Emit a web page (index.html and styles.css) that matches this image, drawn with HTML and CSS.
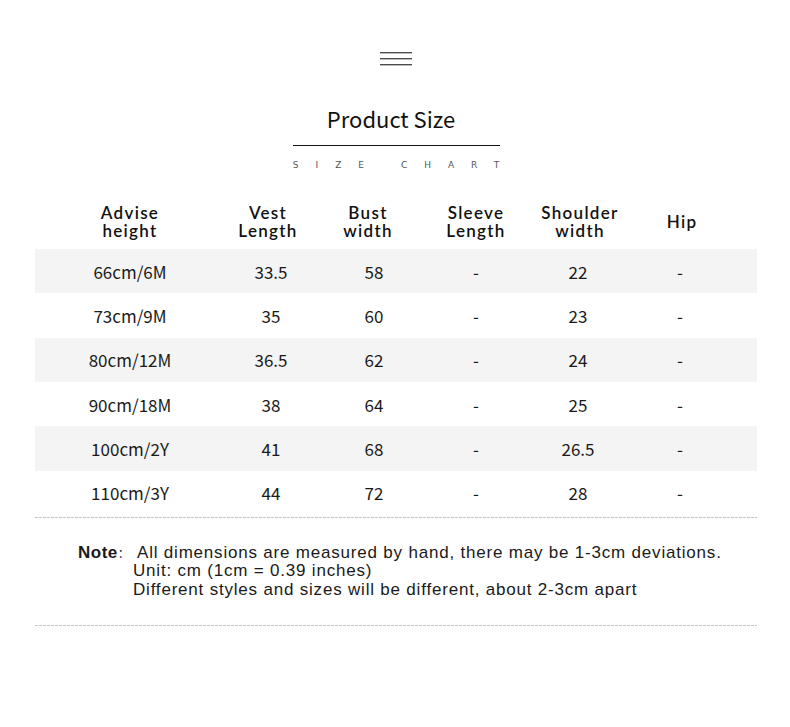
FILE: index.html
```html
<!DOCTYPE html>
<html lang="en">
<head>
<meta charset="utf-8">
<title>Product Size</title>
<link rel="stylesheet" href="styles.css">
</head>
<body>
<div class="page">
  <div class="menu-icon" aria-hidden="true"><span></span><span></span><span></span></div>
  <h1 class="title">Product Size</h1>
  <div class="subtitle">SIZE CHART</div>

  <div class="table">
    <div class="row head">
      <div class="cell first"><span class="hl">Advise</span><span class="hl">height</span></div>
      <div class="cell"><span class="hl">Vest</span><span class="hl">Length</span></div>
      <div class="cell"><span class="hl">Bust</span><span class="hl">width</span></div>
      <div class="cell"><span class="hl">Sleeve</span><span class="hl">Length</span></div>
      <div class="cell"><span class="hl">Shoulder</span><span class="hl">width</span></div>
      <div class="cell"><span class="hl">Hip</span></div>
    </div>
    <div class="row shade">
      <div class="cell first">66cm/6M</div><div class="cell">33.5</div><div class="cell">58</div><div class="cell">-</div><div class="cell">22</div><div class="cell">-</div>
    </div>
    <div class="row">
      <div class="cell first">73cm/9M</div><div class="cell">35</div><div class="cell">60</div><div class="cell">-</div><div class="cell">23</div><div class="cell">-</div>
    </div>
    <div class="row shade">
      <div class="cell first">80cm/12M</div><div class="cell">36.5</div><div class="cell">62</div><div class="cell">-</div><div class="cell">24</div><div class="cell">-</div>
    </div>
    <div class="row">
      <div class="cell first">90cm/18M</div><div class="cell">38</div><div class="cell">64</div><div class="cell">-</div><div class="cell">25</div><div class="cell">-</div>
    </div>
    <div class="row shade">
      <div class="cell first">100cm/2Y</div><div class="cell">41</div><div class="cell">68</div><div class="cell">-</div><div class="cell">26.5</div><div class="cell">-</div>
    </div>
    <div class="row">
      <div class="cell first">110cm/3Y</div><div class="cell">44</div><div class="cell">72</div><div class="cell">-</div><div class="cell">28</div><div class="cell">-</div>
    </div>
  </div>

  <div class="dots"></div>
  <div class="note">
    <div class="note-label"><b>Note</b><span class="colon">：</span></div>
    <div class="note-text">
      <div class="first-line">All dimensions are measured by hand, there may be 1-3cm deviations.</div>
      <div>Unit: cm (1cm = 0.39 inches)</div>
      <div>Different styles and sizes will be different, about 2-3cm apart</div>
    </div>
  </div>
  <div class="dots"></div>
</div>
</body>
</html>
```

FILE: styles.css
```css
html, body {
  margin: 0;
  padding: 0;
  background: #ffffff;
}

.page {
  width: 790px;
  padding-top: 52px;
  display: flex;
  flex-direction: column;
  align-items: center;
  font-family: "Noto Sans CJK SC", "Noto Sans", sans-serif;
  color: #1a1a1a;
}

.menu-icon {
  width: 32px;
  margin-left: 2px;
  display: flex;
  flex-direction: column;
  gap: 4px;
}

.menu-icon span {
  display: block;
  height: 2px;
  background: #4a4a4a;
  border-bottom: 1px solid #bdbdbd;
  box-sizing: border-box;
}

.title {
  margin: 37px 0 0 2px;
  width: 207px;
  box-sizing: border-box;
  padding: 0 10px 12px 0;
  border-bottom: 1px solid #111;
  text-align: center;
  font-size: 22px;
  font-weight: 400;
  line-height: 30px;
  color: #111;
}

.subtitle {
  margin: 13px 0 0 19px;
  font-family: "DejaVu Sans", sans-serif;
  font-size: 9px;
  line-height: 12px;
  letter-spacing: 17px;
  color: #555;
}

.table {
  margin-top: 24px;
  width: 722px;
  margin-left: 2px;
}

.row {
  display: grid;
  grid-template-columns: 186px repeat(5, 102px) 26px;
  height: 44.33px;
  align-items: center;
  font-size: 17px;
}

.row.shade {
  background: #f4f4f4;
}

.row.head {
  height: 54px;
  padding-bottom: 1px;
  box-sizing: border-box;
  font-family: "Lato", "Open Sans", sans-serif;
  font-weight: 600;
  font-size: 17px;
  letter-spacing: 1.3px;
  color: #111;
}

.row.head .cell {
  display: flex;
  flex-direction: column;
  align-items: center;
  gap: 2px;
}

.hl {
  display: block;
  line-height: 16px;
}

.cell {
  text-align: center;
}

.row .cell:nth-child(1) { padding-left: 4px; }
.row .cell:nth-child(2) { padding-right: 2px; }
.row.head .cell:nth-child(2) { padding-right: 8px; }
.row.head .cell:nth-child(3) { padding-right: 12px; }
.row.head .cell:nth-child(5) { padding-left: 4px; }
.row.head .cell:nth-child(6) { padding-left: 4px; }

.dots {
  width: 722px;
  height: 1px;
  margin-left: 2px;
  margin-top: 2px;
  background: repeating-linear-gradient(to right, #c4c4c4 0 3px, transparent 3px 4px);
}

.note {
  width: 722px;
  margin: 26px 0 24px 2px;
  box-sizing: border-box;
  padding-left: 43px;
  display: flex;
  font-family: "Liberation Sans", Arial, sans-serif;
  font-size: 17px;
  letter-spacing: 0.8px;
  line-height: 18.5px;
  color: #1a1a1a;
}

.note-label {
  width: 55px;
  flex: none;
  letter-spacing: 0.5px;
}

.note-label b {
  font-weight: 700;
}

.colon {
  font-family: "Noto Sans CJK SC", sans-serif;
  font-size: 12px;
}

.first-line {
  text-indent: 4px;
}
```
